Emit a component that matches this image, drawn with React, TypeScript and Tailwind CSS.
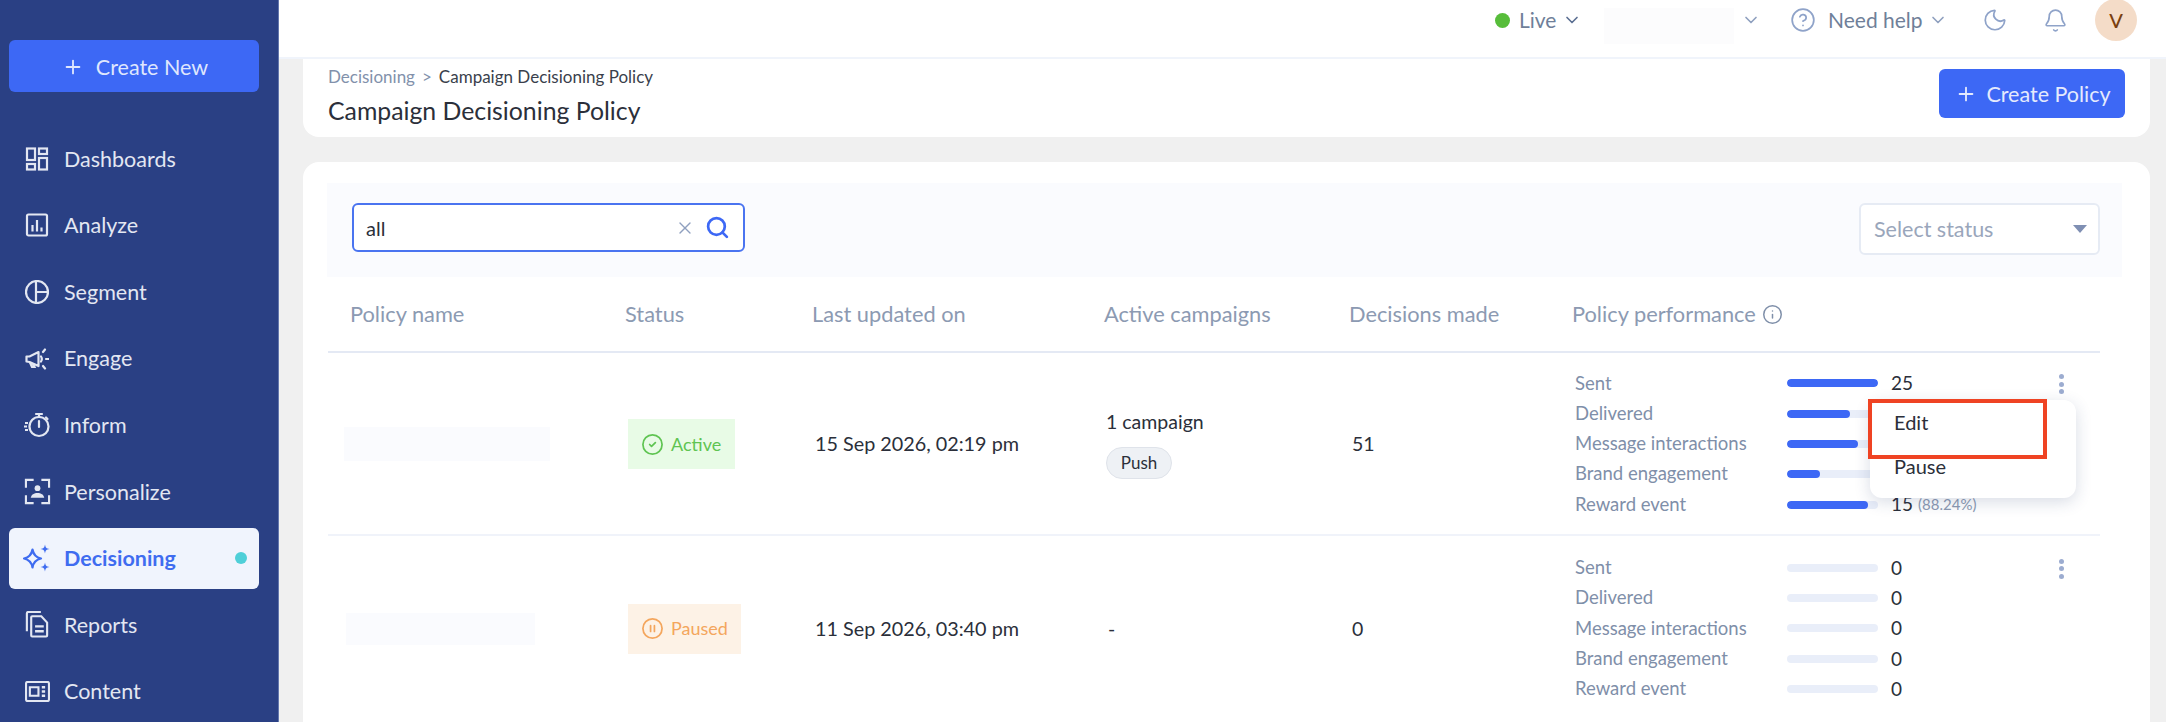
import { Bell, ChevronDown, CircleCheck, CircleHelp, CirclePause, Info, Moon, Plus, Search, X } from "lucide-react"

function DashboardsIcon() {
  return (
    <svg viewBox="0 0 24 24" fill="none" stroke="currentColor" strokeWidth="2.200" className="h-6 w-6">
      <rect x="2" y="1.500" width="8" height="11.500" />
      <rect x="14" y="1.500" width="8" height="5.500" />
      <rect x="2" y="17" width="8" height="5.500" />
      <rect x="14" y="11" width="8" height="11.500" />
    </svg>
  )
}

function AnalyzeIcon() {
  return (
    <svg viewBox="0 0 24 24" fill="none" stroke="currentColor" strokeWidth="2.200" className="h-6 w-6">
      <rect x="2" y="1.500" width="20" height="21" rx="1.500" />
      <path d="M7.500 12v6.500M12 7v11.500M16.500 14.500v4" />
    </svg>
  )
}

function SegmentIcon() {
  return (
    <svg viewBox="0 0 24 24" fill="none" stroke="currentColor" strokeWidth="2.200" className="h-6 w-6">
      <circle cx="12" cy="12" r="11" />
      <path d="M11 1v22M11 12h12" />
    </svg>
  )
}

function EngageIcon() {
  return (
    <svg viewBox="0 0 24 24" fill="none" stroke="currentColor" strokeWidth="2.200" className="h-6 w-6">
      <path d="M1.500 9.500v5l3 .5 9 4V5l-9 4.500z" strokeLinejoin="round" />
      <path d="M5 15.500 7 20h2.500l-1.500-3.500" />
      <path d="M16 9.500c1 1.500 1 3.500 0 5M18 5l2-2.500M21 12h2.500M18 19l2 2.500" strokeLinecap="round" />
    </svg>
  )
}

function InformIcon() {
  return (
    <svg viewBox="0 0 24 24" fill="none" stroke="currentColor" strokeWidth="2.200" className="h-6 w-6 overflow-visible">
      <circle cx="14" cy="13.500" r="9.500" />
      <path d="M14 8v6M11 1h6M14 1v3M21 4.500l1.500 1.500" strokeLinecap="round" />
      <path d="M0 10h3M-1 13.500h3M0 17h3" strokeWidth="1.800" />
    </svg>
  )
}

function PersonalizeIcon() {
  return (
    <svg viewBox="0 0 28 28" fill="none" stroke="currentColor" strokeWidth="2.200" className="h-[27px] w-[27px]">
      <path d="M10 2H2v8M18 2h8v8M2 18v8h8M26 18v8h-8" />
      <circle cx="14" cy="10.500" r="3" fill="currentColor" stroke="none" />
      <path d="M7 20.500c.5-3.500 3.500-5 7-5s6.500 1.500 7 5z" fill="currentColor" stroke="none" />
    </svg>
  )
}

function DecisioningIcon() {
  return (
    <svg viewBox="0 0 28 28" fill="none" stroke="currentColor" strokeWidth="2.200" className="h-[28px] w-[28px]">
      <path d="M9.500 5.500c1 5.300 3.200 8 8.500 9-5.300 1-7.500 3.700-8.500 9-1-5.300-3.200-8-8.500-9 5.300-1 7.500-3.700 8.500-9z" strokeLinejoin="round" />
      <path d="M22 .5c.6 3.200 1.300 3.900 4.500 4.500-3.200.6-3.900 1.300-4.500 4.500-.6-3.200-1.300-3.900-4.500-4.500 3.200-.6 3.900-1.300 4.500-4.500zM22 18.500c.6 3.200 1.300 3.900 4.500 4.500-3.200.6-3.900 1.300-4.500 4.500-.6-3.200-1.300-3.900-4.500-4.500 3.200-.6 3.900-1.300 4.500-4.500z" fill="currentColor" stroke="none" />
    </svg>
  )
}

function ReportsIcon() {
  return (
    <svg viewBox="0 0 24 28" fill="none" stroke="currentColor" strokeWidth="2.200" className="h-[27px] w-6">
      <path d="M16 1H3a1.500 1.500 0 0 0-1.500 1.500V21" />
      <path d="M7 5.500h9.500l6 6.500v13.500a1 1 0 0 1-1 1H7a1 1 0 0 1-1-1v-19a1 1 0 0 1 1-1z" />
      <path d="M10 16h9M10 21h9" strokeWidth="2.400" />
    </svg>
  )
}

function ContentIcon() {
  return (
    <svg viewBox="0 0 26 22" fill="none" stroke="currentColor" strokeWidth="2.200" className="h-[21px] w-[25px]">
      <rect x="1" y="1" width="24" height="20" rx="1.500" />
      <path d="M5 6.500h9v9H5z" strokeWidth="2.200" />
      <path d="M17.500 6.500h3.500M17.500 11h3.500M17.500 15.500h3.500" strokeWidth="2.600" />
    </svg>
  )
}

const navItems = [
  { label: "Dashboards", icon: <DashboardsIcon /> },
  { label: "Analyze", icon: <AnalyzeIcon /> },
  { label: "Segment", icon: <SegmentIcon /> },
  { label: "Engage", icon: <EngageIcon /> },
  { label: "Inform", icon: <InformIcon /> },
  { label: "Personalize", icon: <PersonalizeIcon /> },
  { label: "Decisioning", icon: <DecisioningIcon />, active: true },
  { label: "Reports", icon: <ReportsIcon /> },
  { label: "Content", icon: <ContentIcon /> },
]

function Sidebar() {
  return (
    <aside className="flex w-[279px] shrink-0 flex-col border-r border-[#6377ad] bg-[#2a4084] px-[9px] pt-10">
      <button className="flex h-[55px] w-[250px] items-center justify-center gap-[12px] rounded-[6px] bg-[#3d68f5] pl-[2px] pt-[1px] text-[21.5px] text-[#dfe6fd]">
        <Plus className="h-[22px] w-[22px]" strokeWidth={2} />
        Create New
      </button>
      <nav className="mt-[36px] flex w-[250px] flex-col gap-[5.6px]">
        {navItems.map((item) => (
          <div
            key={item.label}
            className={
              item.active
                ? "flex h-[61px] items-center rounded-[6px] bg-[#f0f4fd] pl-[14px] pr-[12px] text-[21.5px] font-bold text-[#3f6cf0]"
                : "flex h-[61px] items-center pl-[14px] pr-[12px] text-[21.5px] text-[#e3e7f2]"
            }
          >
            <span className="flex w-[28px] shrink-0 items-center justify-center">{item.icon}</span>
            <span className="ml-[13px]">{item.label}</span>
            {item.active && <span className="ml-auto h-[12px] w-[12px] rounded-full bg-[#4fcfd8]" />}
          </div>
        ))}
      </nav>
    </aside>
  )
}

function TopBar() {
  return (
    <header className="flex h-[59px] shrink-0 items-start justify-end border-b-2 border-[#f0f4fb] bg-white pr-[29px] text-[21px] text-[#6f7f99]">
      <div className="flex h-10 items-center">
        <span className="h-[15px] w-[15px] rounded-full bg-[#57bd3a]" />
        <span className="ml-[9px] w-[46px]">Live</span>
        <ChevronDown className="ml-[-3px] h-[20px] w-[20px] text-[#5b6f92]" strokeWidth={2} />
        <span className="ml-[22px] mt-[8px] h-[36px] w-[130px] self-start bg-[#fcfcfd]" />
        <ChevronDown className="ml-[7px] h-[20px] w-[20px] text-[#8fa0bf]" strokeWidth={2} />
        <CircleHelp className="ml-[29px] h-[26px] w-[26px] text-[#8fa3c9]" strokeWidth={1.6} />
        <span className="ml-[12px] w-[97px] whitespace-nowrap">Need help</span>
        <ChevronDown className="ml-[3px] h-[20px] w-[20px] text-[#8fa0bf]" strokeWidth={2} />
        <Moon className="ml-[34px] h-[26px] w-[26px] text-[#8fa3c9]" strokeWidth={1.6} />
        <Bell className="ml-[35px] h-[25px] w-[25px] text-[#8fa3c9]" strokeWidth={1.6} />
        <span className="ml-[27px] flex h-[42px] w-[42px] items-center justify-center rounded-full bg-[#f4dcc8] text-[20px] font-medium text-[#7a3f10]">
          V
        </span>
      </div>
    </header>
  )
}

function PageHeader() {
  return (
    <section className="flex h-[78px] shrink-0 justify-between rounded-b-2xl bg-white pl-[25px] pr-[25px]">
      <div>
        <div className="mt-[8px] flex items-center text-[17px] leading-5">
          <span className="text-[#8291ab]">Decisioning</span>
          <span className="mx-[7px] text-[#8291ab]">&gt;</span>
          <span className="text-[#3a3f4c]">Campaign Decisioning Policy</span>
        </div>
        <h1 className="mt-[8px] text-[24.800px] leading-8 font-normal text-[#2b2f3a]">Campaign Decisioning Policy</h1>
      </div>
      <button className="mt-[10px] flex h-[49px] w-[186px] items-center justify-center gap-[9px] rounded-[6px] bg-[#3d68f5] pl-[2px] pt-[1px] text-[21.5px] text-[#e4eafd]">
        <Plus className="h-[22px] w-[22px]" strokeWidth={2} />
        Create Policy
      </button>
    </section>
  )
}

function FilterBar() {
  return (
    <div className="ml-[24px] mr-[28px] flex h-[94px] items-start justify-between bg-[#fafbfe] pl-[25px] pr-[22px] pt-[20px]">
      <div className="flex h-[49px] w-[393px] items-center rounded-[6px] border-2 border-[#4a74f0] bg-white pl-[12px] pr-[13px] text-[20px] text-[#2b2f3a]">
        <span>all</span>
        <X className="ml-auto h-[20px] w-[20px] text-[#8fa0bf]" strokeWidth={1.6} />
        <Search className="ml-[10px] h-[25px] w-[25px] text-[#3d68f5]" strokeWidth={2.6} />
      </div>
      <div className="flex h-[52px] w-[241px] items-center justify-between rounded-[6px] border-2 border-[#e6ebf4] bg-white pl-[13px] pr-[11px] text-[21.5px] text-[#9aa6bb]">
        <span>Select status</span>
        <span className="h-0 w-0 border-x-[7px] border-t-[8px] border-x-transparent border-t-[#7f8fb3]" />
      </div>
    </div>
  )
}

const columns = "grid grid-cols-[297px_187px_292px_245px_223px_1fr]"
const rowColumns = "grid grid-cols-[300px_187px_291px_246px_223px_1fr] items-center"

function TableHead() {
  return (
    <div className={`${columns} h-[76px] items-center border-b-2 border-[#e4e9f4] pt-[1px] text-[21.800px] text-[#8c9ab2]`}>
      <span className="pl-[22px]">Policy name</span>
      <span>Status</span>
      <span>Last updated on</span>
      <span>Active campaigns</span>
      <span>Decisions made</span>
      <span className="flex items-center gap-[6px]">
        Policy performance
        <Info className="h-[21px] w-[21px] text-[#7f8fa9]" strokeWidth={1.7} />
      </span>
    </div>
  )
}

type Metric = { label: string; pct: number; value?: string; extra?: string }

function Performance({ metrics }: { metrics: Metric[] }) {
  return (
    <div className="flex items-start justify-between pr-[36px]">
      <div>
        {metrics.map((m) => (
          <div key={m.label} className="flex h-[30.3px] items-center">
            <span className="w-[212px] whitespace-nowrap text-[18.5px] text-[#7f8fa9]">{m.label}</span>
            <div className="h-[8px] w-[91px] overflow-hidden rounded-full bg-[#e9eef9]">
              <div className="h-full rounded-full bg-[#3d68f5]" style={{ width: `${m.pct}%` }} />
            </div>
            {m.value && <span className="ml-[13px] text-[19px] text-[#2b2f3a]">{m.value}</span>}
            {m.extra && <span className="ml-[5px] text-[15px] text-[#8c9ab2]">{m.extra}</span>}
          </div>
        ))}
      </div>
      <Kebab />
    </div>
  )
}

function Kebab() {
  return (
    <div className="mt-[6px] flex h-[20px] w-[5px] flex-col justify-between">
      <span className="h-[5px] w-[5px] rounded-full bg-[#9cacd0]" />
      <span className="h-[5px] w-[5px] rounded-full bg-[#9cacd0]" />
      <span className="h-[5px] w-[5px] rounded-full bg-[#9cacd0]" />
    </div>
  )
}

// values for the middle rows sit under the open menu
const activeMetrics: Metric[] = [
  { label: "Sent", pct: 100, value: "25" },
  { label: "Delivered", pct: 69 },
  { label: "Message interactions", pct: 78 },
  { label: "Brand engagement", pct: 36 },
  { label: "Reward event", pct: 89, value: "15", extra: "(88.24%)" },
]

const pausedMetrics: Metric[] = ["Sent", "Delivered", "Message interactions", "Brand engagement", "Reward event"].map(
  (label) => ({ label, pct: 0, value: "0" }),
)

function ActionMenu() {
  return (
    <>
      <div className="absolute left-[1542px] top-[47px] flex h-[98px] w-[206px] flex-col rounded-[12px] bg-white pl-[24px] pt-[8px] text-[20px] text-[#2b2f3a] shadow-[0_4px_16px_rgba(40,60,110,0.18)]">
        <span className="h-[44px] leading-[28px]">Edit</span>
        <span className="leading-[28px]">Pause</span>
      </div>
      <div className="absolute left-[1540px] top-[46px] h-[60px] w-[179px] border-4 border-[#ef4323]" />
    </>
  )
}

function TableRows() {
  return (
    <>
      <div className={`${rowColumns} relative h-[183px] border-b-2 border-[#f0f3fa] pt-[1px] text-[19.500px] text-[#2b2f3a]`}>
        <div className="pl-[16px]">
          <div className="h-[34px] w-[206px] bg-[#fafbfe]" />
        </div>
        <div>
          <span className="inline-flex h-[50px] w-[107px] items-center gap-[7px] bg-[#e8fbe6] pl-[13px] text-[18px] text-[#5fc452]">
            <CircleCheck className="h-[23px] w-[23px]" strokeWidth={1.8} />
            Active
          </span>
        </div>
        <div className="text-[19.800px]">15 Sep 2026, 02:19 pm</div>
        <div className="flex flex-col items-start gap-[13px]">
          <span className="leading-[24px]">1 campaign</span>
          <span className="flex h-[32px] w-[66px] items-center justify-center rounded-full border border-[#dfe3ea] bg-[#eef1f5] text-[17px]">
            Push
          </span>
        </div>
        <div>51</div>
        <Performance metrics={activeMetrics} />
        <ActionMenu />
      </div>
      <div className={`${rowColumns} h-[183px] pt-[2px] text-[19.500px] text-[#2b2f3a]`}>
        <div className="pl-[18px]">
          <div className="h-[32px] w-[189px] bg-[#fafbfe]" />
        </div>
        <div>
          <span className="inline-flex h-[50px] w-[113px] items-center gap-[7px] bg-[#fdf2e6] pl-[13px] text-[18px] text-[#f4a65d]">
            <CirclePause className="h-[23px] w-[23px]" strokeWidth={1.8} />
            Paused
          </span>
        </div>
        <div className="text-[19.800px]">11 Sep 2026, 03:40 pm</div>
        <div className="pl-[2px]">-</div>
        <div>0</div>
        <Performance metrics={pausedMetrics} />
      </div>
    </>
  )
}

export default function App() {
  return (
    <div className="flex h-[722px] w-[2166px] overflow-hidden bg-[#f0f0f0] font-['Lato',sans-serif]">
      <Sidebar />
      <main className="flex min-w-0 flex-1 flex-col">
        <TopBar />
        <div className="flex min-h-0 flex-1 flex-col gap-[25px] pl-[24px] pr-[16px]">
          <PageHeader />
          <section className="flex-1 rounded-t-2xl bg-white pt-[21px]">
            <FilterBar />
            <div className="ml-[25px] w-[1772px]">
              <TableHead />
              <TableRows />
            </div>
          </section>
        </div>
      </main>
    </div>
  )
}
